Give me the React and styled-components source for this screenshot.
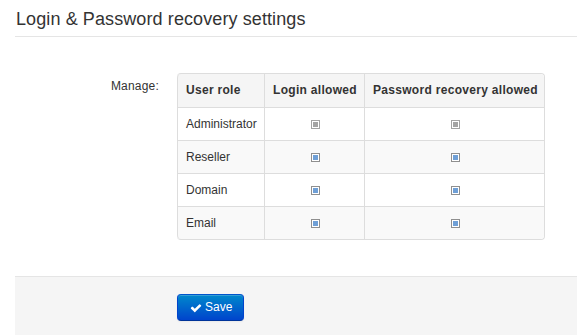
import React from "react";
import styled, { createGlobalStyle } from "styled-components";

const GlobalStyle = createGlobalStyle`
  html, body { margin: 0; padding: 0; background: #fff; }
  body {
    font-family: "Liberation Sans", Arial, Helvetica, sans-serif;
    font-size: 12px;
    color: #333;
  }
`;

const Page = styled.div`
  padding-left: 15px;
`;

const Title = styled.h1`
  margin: 0;
  padding: 9px 0 7px 1px;
  font-size: 18px;
  line-height: 20px;
  font-weight: normal;
  letter-spacing: 0.1px;
  color: #333;
  border-bottom: 1px solid #e5e5e5;
`;

const FormRow = styled.div`
  display: grid;
  grid-template-columns: 145px auto;
  column-gap: 17px;
  margin-top: 36px;
  align-items: start;
`;

const Label = styled.div`
  text-align: right;
  padding-top: 5px;
  padding-right: 1px;
  line-height: 17px;
  letter-spacing: 0.2px;
  color: #333;
`;

const Table = styled.table`
  border-collapse: separate;
  border-spacing: 0;
  border: 1px solid #ddd;
  border-left: 0;
  border-radius: 4px;
  justify-self: start;
  table-layout: fixed;
  width: 367px;
`;

const Th = styled.th`
  box-sizing: border-box;
  width: ${(p) => p.$w}px;
  padding: 8px 7px 8px 8px;
  line-height: 17px;
  font-weight: bold;
  letter-spacing: 0.3px;
  text-align: ${(p) => (p.$center ? "center" : "left")};
  background: #f5f5f5;
  border-left: 1px solid #ddd;
  white-space: nowrap;
  &:first-child { border-top-left-radius: 4px; }
  &:last-child { border-top-right-radius: 4px; }
`;

const Tr = styled.tr`
  background: ${(p) => (p.$striped ? "#f9f9f9" : "#fff")};
  &:last-child td:first-child { border-bottom-left-radius: 4px; }
  &:last-child td:last-child { border-bottom-right-radius: 4px; }
`;

const Td = styled.td`
  padding: 8px 7px 7px 8px;
  line-height: 17px;
  text-align: ${(p) => (p.$center ? "center" : "left")};
  vertical-align: top;
  border-left: 1px solid #ddd;
  border-top: 1px solid #ddd;
  white-space: nowrap;
`;

const Check = styled.span`
  display: inline-block;
  box-sizing: border-box;
  width: 9px;
  height: 9px;
  margin-top: 4px;
  border: 1px solid ${(p) => (p.$disabled ? "#a3a3a3" : "#8f8f8f")};
  background: #fff;
  padding: 1px;
  vertical-align: top;
  &::after {
    content: "";
    display: block;
    width: 5px;
    height: 5px;
    background: ${(p) => (p.$disabled ? "#a3a3a3" : "#6f9fd6")};
  }
`;

const Footer = styled.div`
  margin-top: 36px;
  border-top: 1px solid #e5e5e5;
  background: #f5f5f5;
  padding: 17px 0 20px 162px;
`;

const Button = styled.button`
  display: inline-flex;
  align-items: center;
  gap: 3px;
  height: 27px;
  box-sizing: border-box;
  padding: 0 11px 0 12px;
  border: 1px solid #0044cc;
  border-color: #0055cc #0044cc #003399;
  border-radius: 4px;
  background: linear-gradient(to bottom, #0088cc, #0044cc);
  color: #fff;
  font-family: "Liberation Sans", Arial, Helvetica, sans-serif;
  font-size: 12px;
  line-height: 17px;
  cursor: pointer;
  box-shadow: inset 0 1px 0 rgba(255, 255, 255, 0.2), 0 1px 2px rgba(0, 0, 0, 0.05);
`;

const CheckIcon = () => (
  <svg width="12" height="12" viewBox="0 0 1792 1792" fill="#fff" aria-hidden="true">
    <path d="M1671 566q0 40-28 68l-724 724-136 136q-28 28-68 28t-68-28l-136-136-362-362q-28-28-28-68t28-68l136-136q28-28 68-28t68 28l294 295 656-657q28-28 68-28t68 28l136 136q28 28 28 68z" />
  </svg>
);

const roles = [
  { name: "Administrator", disabled: true },
  { name: "Reseller" },
  { name: "Domain" },
  { name: "Email" },
];

export default function App() {
  return (
    <Page>
      <GlobalStyle />
      <Title>Login &amp; Password recovery settings</Title>
      <FormRow>
        <Label>Manage:</Label>
        <Table>
          <thead>
            <tr>
              <Th $w={87}>User role</Th>
              <Th $w={100} $center>Login allowed</Th>
              <Th $w={180} $center>Password recovery allowed</Th>
            </tr>
          </thead>
          <tbody>
            {roles.map((r, i) => (
              <Tr key={r.name} $striped={i % 2 === 1}>
                <Td>{r.name}</Td>
                <Td $center>
                  <Check $disabled={r.disabled} />
                </Td>
                <Td $center>
                  <Check $disabled={r.disabled} />
                </Td>
              </Tr>
            ))}
          </tbody>
        </Table>
      </FormRow>
      <Footer>
        <Button type="button">
          <CheckIcon />
          Save
        </Button>
      </Footer>
    </Page>
  );
}
